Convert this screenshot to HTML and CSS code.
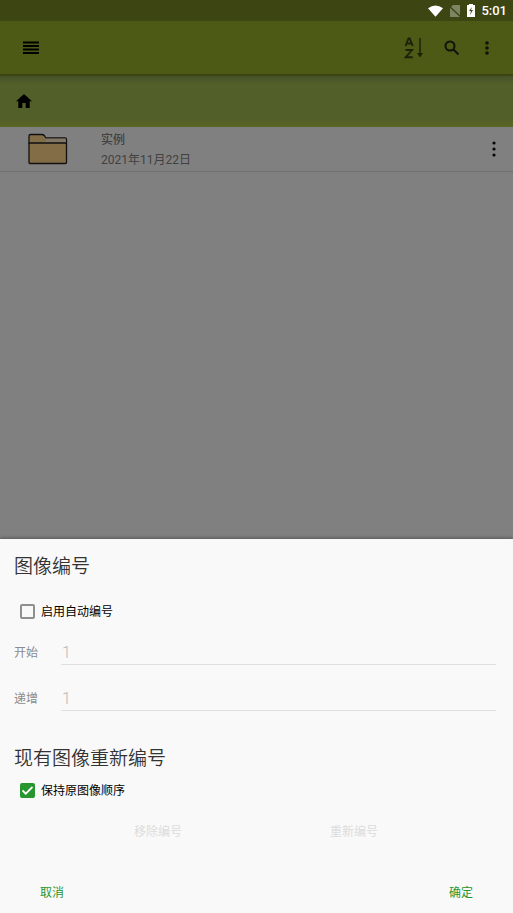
FILE: index.html
```html
<!DOCTYPE html>
<html lang="zh-CN">
<head>
<meta charset="utf-8">
<meta name="viewport" content="width=device-width, initial-scale=1">
<title>图像编号</title>
<link rel="stylesheet" href="styles.css">
</head>
<body>
<div class="screen">
  <div class="status">
    <svg width="15" height="12" viewBox="0 0 16 12" fill="#fff"><path d="M0 3Q8-3 16 3L8 12z"/></svg>
    <svg width="12" height="12" viewBox="0 0 12 12"><path d="M4 0h7v12H1V3z" fill="#7d8463"/><path d="M0 1l12 11" stroke="#3d4613" stroke-width="1.400"/></svg>
    <svg width="8" height="13" viewBox="0 0 8 13"><path d="M2 0h4v1h2v12H0V1h2z" fill="#fff"/><path d="M5 3L2 7h2l-1 4 3-5H4z" fill="#3d4613"/></svg>
    <span class="clock">5:01</span>
  </div>
  <header class="appbar">
    <button class="icon menu" aria-label="菜单"><svg width="16" height="13" viewBox="0 0 16 13"><path d="M0 1.5h16M0 5h16M0 8.5h16M0 12h16" stroke="#000" stroke-width="1.8"/></svg></button>
    <button class="icon" aria-label="排序"><svg width="20" height="22" viewBox="0 0 20 22" fill="none" stroke="#1c2208" stroke-width="1.9"><path d="M1.500 9L4.500 1.500h1.200L8.700 9M2.800 6.500h4.600M1.500 13h6.500L1.800 20.200h7"/><path d="M16 1v17" stroke-width="1.500"/><path d="M13 16h6l-3 4.500z" fill="#1c2208" stroke="none"/></svg></button>
    <button class="icon" aria-label="搜索"><svg width="16" height="16" viewBox="0 0 16 16" fill="none" stroke="#10130a" stroke-width="2"><circle cx="6" cy="6" r="4.500"/><path d="M9.500 9.500l5 5"/></svg></button>
    <button class="icon" aria-label="更多"><svg width="4" height="16" viewBox="0 0 4 16" fill="#10130a"><circle cx="2" cy="3" r="1.800"/><circle cx="2" cy="8" r="1.800"/><circle cx="2" cy="13" r="1.800"/></svg></button>
  </header>
  <nav class="crumbs">
    <button class="icon" aria-label="主页"><svg width="16" height="14" viewBox="0 0 16 14"><path d="M8 0l8 7.200h-2.300V14H9.700V9H6.300v5H2.300V7.200H0z"/></svg></button>
  </nav>
  <main class="files">
    <article class="file">
      <svg class="folder" width="40" height="32" viewBox="0 0 40 32" fill="#836d47" stroke="#111" stroke-width="1.300" stroke-linejoin="round"><path d="M1 29.500V3q0-1.500 1.500-1.500H14q2 0 3 2l1 1.500h19q1.500 0 1.500 1.500v23q0 1-1 1H2q-1 0-1-1z"/><path d="M18 5.600h19q.9 0 .9 1V10H17z" fill="#807764" stroke="none"/><path d="M1 11q0-1 1-1h35.500q1 0 1 1" fill="none"/></svg>
      <div class="info"><h2 class="name">实例</h2><time class="date">2021年11月22日</time></div>
      <button class="icon" aria-label="更多选项"><svg width="4" height="16" viewBox="0 0 4 16" fill="#050505"><circle cx="2" cy="2" r="1.600"/><circle cx="2" cy="8" r="1.600"/><circle cx="2" cy="14" r="1.600"/></svg></button>
    </article>
  </main>
  <form class="sheet">
    <h1 class="title">图像编号</h1>
    <label class="check auto"><input type="checkbox"><span>启用自动编号</span></label>
    <div class="fields">
      <label for="start">开始</label><input id="start" type="text" value="1" disabled>
      <label for="step">递增</label><input id="step" type="text" value="1" disabled>
    </div>
    <h1 class="title second">现有图像重新编号</h1>
    <label class="check keep"><input type="checkbox" checked><span>保持原图像顺序</span></label>
    <div class="actions"><button type="button" disabled>移除编号</button><button type="button" disabled>重新编号</button></div>
    <div class="footer"><button type="button">取消</button><button type="button">确定</button></div>
  </form>
</div>
</body>
</html>
```
FILE: styles.css
```css
* { box-sizing: border-box; }
body {
  margin: 0;
  background: #808080;
  font: 12px/20px Roboto, "Noto Sans CJK SC", sans-serif;
  color: #111;
}
h1, h2 { margin: 0; font-weight: 400; }
button {
  padding: 0;
  border: 0;
  background: none;
  font: inherit;
  color: inherit;
}
svg { display: block; }
.screen { min-height: 100vh; display: flex; flex-direction: column; }
.status {
  height: 21px;
  padding: 0 6px 0 0;
  display: flex;
  align-items: center;
  justify-content: flex-end;
  gap: 6px;
  background: #3d4613;
  color: #fff;
}
.clock { font-size: 13px; font-weight: 500; }
.appbar {
  height: 55px;
  padding: 0 24px 0 23px;
  display: flex;
  align-items: center;
  gap: 20px;
  background: #4c5a16;
  border-bottom: 2px solid #3a4512;
}
.menu { margin-right: auto; }
.appbar .icon:last-child { margin-left: 5px; }
.crumbs {
  height: 51px;
  padding: 0 16px 2px;
  display: flex;
  align-items: center;
  background: linear-gradient(#46512a, #535f28 8px, #535f28 44px, #586724);
}
.files { flex: 1; }
.file {
  height: 45px;
  padding: 0 17px 0 28px;
  display: flex;
  align-items: center;
  border-bottom: 1px solid #717171;
}
.info { flex: 1; margin-left: 33px; padding-top: 2px; color: #414141; }
.name { font-size: 12px; font-weight: 500; }
.date { display: block; }
.sheet {
  padding: 12px 17px 8px 14px;
  background: #f9f9f9;
  box-shadow: 0 -1px 3px #555;
}
.title { font-size: 19px; line-height: 28px; color: #333; font-weight: 350; font-family: "Noto Sans CJK SC", sans-serif; }
.check { height: 24px; display: flex; align-items: center; gap: 6px; padding-left: 6px; color: #000; }
.check span { padding-top: 2px; }
.check input {
  appearance: none;
  width: 15px;
  height: 15px;
  margin: 0;
  border: 2px solid #8f8f8f;
  border-radius: 2px;
}
.check input:checked {
  border-color: #28962e;
  background: #28962e url("data:image/svg+xml,%3Csvg xmlns='http://www.w3.org/2000/svg' viewBox='0 0 11 11'%3E%3Cpath d='M.5 5.500l3.200 3.200L10.500 2' fill='none' stroke='white' stroke-width='1.800'/%3E%3C/svg%3E") center / 11px no-repeat;
}
.auto { margin-top: 20px; }
.fields {
  margin-top: 17px;
  display: grid;
  grid-template-columns: 47px 1fr;
  row-gap: 21px;
  align-items: center;
  color: #8c8c8c;
}
.fields input {
  width: 100%;
  height: 25px;
  padding: 0 1px;
  border: 0;
  border-bottom: 1px solid #e0e0e0;
  background: none;
  font: 300 16px/24px Roboto, sans-serif;
  color: #b8b8b8;
}
.second { margin-top: 32px; }
.keep { margin-top: 7px; }
.actions {
  margin: 18px 44px 0 46px;
  display: grid;
  grid-template-columns: 1fr 1fr;
  line-height: 24px;
  color: #dcdcdc;
}
.footer {
  margin: 37px 23px 0 26px;
  display: flex;
  justify-content: space-between;
  line-height: 24px;
  color: #28962e;
}
```
